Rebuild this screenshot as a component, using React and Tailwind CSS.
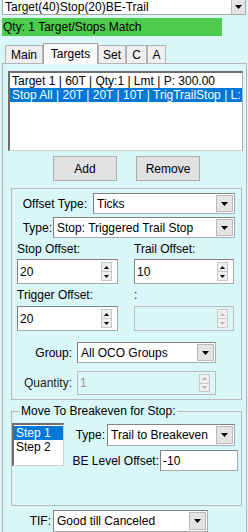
import React from 'react';

const Tri = ({ up = false, w = 7, h = 4, color = '#000' }) => (
  <svg width={w} height={h} viewBox={`0 0 ${w} ${h}`}>
    <path d={up ? `M0 ${h}H${w}L${w / 2} 0z` : `M0 0H${w}L${w / 2} ${h}z`} fill={color} />
  </svg>
);

const Combo = ({ value, className = '' }) => (
  <div className={`flex bg-white border border-[#a9a9a9] border-t-[#828282] border-l-[#828282] ${className}`}>
    <div className="flex-1 flex items-center pl-[3px] whitespace-nowrap overflow-hidden">{value}</div>
    <div className="w-[17px] my-[1px] mr-[1px] flex items-center justify-center bg-[#e4e4e4] border border-[#b9b9b9]">
      <Tri />
    </div>
  </div>
);

const Spin = ({ value, disabled = false, className = '' }) => {
  const arrow = disabled ? '#b4b4b4' : '#000';
  return (
    <div
      className={`flex border ${
        disabled ? 'border-[#bcbcbc]' : 'bg-white border-[#a9a9a9] border-t-[#828282] border-l-[#828282]'
      } ${className}`}
    >
      <div className={`flex-1 flex items-center pl-[2px] ${disabled ? 'text-[#9a9a9a]' : ''}`}>{value}</div>
      <div className="flex flex-col my-[2px] mr-[5px] w-[11px]">
        <div className="flex-1 flex items-center justify-center bg-[#efefef] border border-[#c8c8c8]">
          <Tri up w={5} h={3} color={arrow} />
        </div>
        <div className="flex-1 flex items-center justify-center bg-[#efefef] border border-t-0 border-[#c8c8c8]">
          <Tri w={5} h={3} color={arrow} />
        </div>
      </div>
    </div>
  );
};

const Button = ({ children, className = '' }) => (
  <div className={`flex items-center justify-center bg-[#e1e1e1] border border-[#adadad] ${className}`}>
    {children}
  </div>
);

export default function App() {
  const tabs = [
    { name: 'Main', w: 'w-[38px]' },
    { name: 'Targets', w: 'w-[55px]', active: true },
    { name: 'Set', w: 'w-[28px]' },
    { name: 'C', w: 'w-[21px]' },
    { name: 'A', w: 'w-[19px]' },
  ];

  return (
    <div
      className="w-[248px] h-[532px] overflow-hidden bg-[#d9f6f8] text-[12px] leading-[14px] text-black"
      style={{ fontFamily: '"Liberation Sans", Arial, sans-serif' }}
    >
      {/* template selector */}
      <div className="ml-[2px] w-[244px] h-[15px] flex bg-white border-l border-b border-r border-[#a9a9a9]">
        <div className="flex-1 flex items-center pl-[2px] whitespace-nowrap">Target(40)Stop(20)BE-Trail</div>
        <div className="w-[14px] flex items-center justify-center bg-[#e4e4e4] border-l border-[#b9b9b9]">
          <Tri />
        </div>
      </div>

      <div className="mt-[3px] ml-[2px] w-[220px] h-[18px] flex items-center pl-[1px] bg-[#4dcb4d] whitespace-nowrap">
        Qty: 1 Target/Stops Match
      </div>

      {/* Tabs */}
      <div className="mt-[6px] ml-[5px] h-[21px] flex items-end">
        {tabs.map((t) => (
          <div
            key={t.name}
            className={`${t.w} flex items-center justify-center border-t border-l border-r ${
              t.active
                ? 'h-[21px] bg-[#f9f9f9] border-[#a3a3a3] relative z-10 -mb-px pb-[1px]'
                : 'h-[18px] bg-[#efefef] border-[#b4b4b4]'
            }`}
          >
            {t.name}
          </div>
        ))}
      </div>

      {/* Tab page */}
      <div className="ml-[2px] w-[245px] h-[480px] border-t border-l border-r border-[#b4b4b4]">
        {/* targets list */}
        <div className="mt-[7px] ml-[5px] w-[235px] h-[80px] bg-white border-l-2 border-t-2 border-r border-b border-[#6e6e6e] border-r-[#a9a9a9] border-b-[#d0d0d0] pt-[1px] overflow-hidden whitespace-nowrap">
          <div className="h-[14px] pl-[2px]">Target 1 | 60T | Qty:1 | Lmt | P: 300.00</div>
          <div className="h-[14px] pl-[2px] bg-[#0078d7] text-white">
            Stop All | 20T | 20T | 10T | TrigTrailStop | L:
          </div>
        </div>

        <div className="mt-[5px] flex">
          <Button className="ml-[50px] w-[64px] h-[25px]">Add</Button>
          <Button className="ml-[19px] w-[64px] h-[25px]">Remove</Button>
        </div>

        {/* order settings */}
        <div className="mt-[7px] ml-[8px] w-[231px] h-[212px] border border-[#b9b9b9]">
          <div className="mt-[4px] h-[21px] flex items-center">
            <div className="w-[81px] text-right pr-[6px]">Offset Type:</div>
            <Combo value="Ticks" className="w-[142px] h-[21px]" />
          </div>
          <div className="mt-[3px] h-[21px] flex items-center">
            <div className="w-[41px] text-right pr-[1px]">Type:</div>
            <Combo value="Stop: Triggered Trail Stop" className="w-[182px] h-[21px]" />
          </div>

          <div className="mt-[4px] h-[14px] flex">
            <div className="ml-[5px] w-[117px]">Stop Offset:</div>
            <div>Trail Offset:</div>
          </div>
          <div className="mt-[3px] flex">
            <Spin value="20" className="ml-[5px] w-[101px] h-[25px]" />
            <Spin value="10" className="ml-[16px] w-[100px] h-[25px]" />
          </div>

          <div className="mt-[4px] h-[14px] flex">
            <div className="ml-[5px] w-[117px]">Trigger Offset:</div>
            <div>:</div>
          </div>
          <div className="mt-[4px] flex">
            <Spin value="20" className="ml-[5px] w-[101px] h-[25px]" />
            <Spin value="" disabled className="ml-[16px] w-[100px] h-[25px]" />
          </div>

          <div className="mt-[11px] h-[21px] flex items-center">
            <div className="w-[65px] text-right pr-[5px]">Group:</div>
            <Combo value="All OCO Groups" className="w-[139px] h-[21px]" />
          </div>
          <div className="mt-[8px] h-[24px] flex items-center">
            <div className="w-[65px] text-right pr-[5px] text-[#222]">Quantity:</div>
            <Spin value="1" disabled className="w-[139px] h-[24px]" />
          </div>
        </div>

        {/* breakeven */}
        <fieldset className="mt-[4px] ml-[8px] w-[231px] border border-[#b9b9b9]">
          <legend className="ml-[8px] px-[1px] leading-[14px]">Move To Breakeven for Stop:</legend>
          <div className="h-[87px] flex">
            <div className="mt-[5px] w-[52px] h-[43px] bg-white border-l-2 border-t-2 border-r border-b border-[#6e6e6e] border-r-[#d0d0d0] border-b-[#d0d0d0] pt-[1px]">
              <div className="h-[14px] pl-[2px] bg-[#0078d7] text-white">Step 1</div>
              <div className="h-[14px] pl-[2px]">Step 2</div>
            </div>
            <div className="flex flex-col">
              <div className="mt-[6px] h-[22px] flex items-center">
                <div className="w-[43px] text-right pr-[2px]">Type:</div>
                <Combo value="Trail to Breakeven" className="w-[128px] h-[22px]" />
              </div>
              <div className="mt-[4px] h-[21px] flex items-center">
                <div className="w-[96px] text-right pr-[1px] whitespace-nowrap">BE Level Offset:</div>
                <div className="w-[78px] h-[21px] flex items-center pl-[2px] bg-white border border-[#a9a9a9] border-t-[#828282] border-l-[#828282]">
                  -10
                </div>
              </div>
            </div>
          </div>
        </fieldset>

        <div className="mt-[4px] h-[22px] flex items-center">
          <div className="w-[50px] text-right pr-[2px]">TIF:</div>
          <Combo value="Good till Canceled" className="w-[155px] h-[22px]" />
        </div>
      </div>
    </div>
  );
}
